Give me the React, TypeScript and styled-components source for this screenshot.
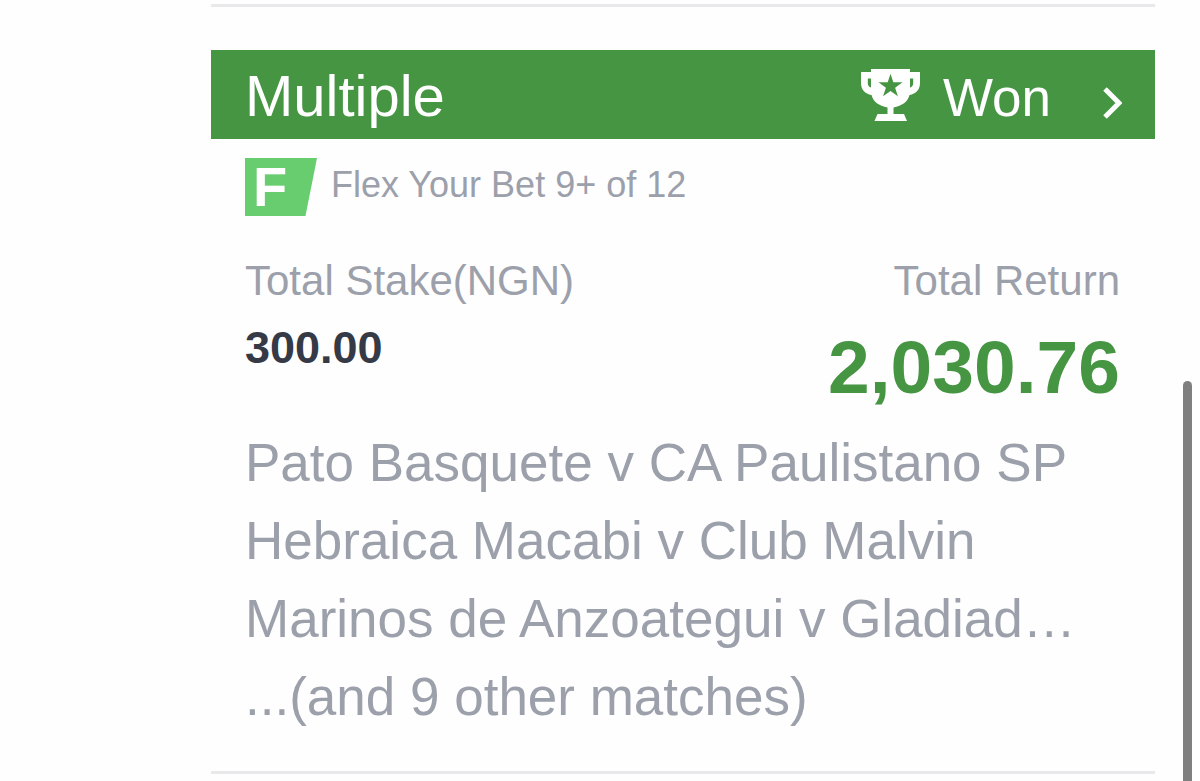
import React from 'react';
import styled, { createGlobalStyle } from 'styled-components';

const green = '#459543';
const grey = '#9ca0ab';

const GlobalStyle = createGlobalStyle`
  *, *::before, *::after { box-sizing: border-box; }
  body {
    margin: 0;
    background: #fefefe;
    font-family: "Liberation Sans", Arial, Helvetica, sans-serif;
    color: ${grey};
    overflow: hidden;
  }
`;

const Page = styled.main`
  padding: 4px 45px 0 211px;
`;

const Ticket = styled.article`
  padding-top: 43px;
  border-top: 3px solid #e9e9eb;
`;

const TicketHeader = styled.a`
  display: flex;
  align-items: baseline;
  padding: 5px 33px 0 34px;
  background: ${green};
  color: #fff;
  line-height: 82px;
  text-decoration: none;
`;

const BetType = styled.h2`
  flex: 1;
  margin: 0;
  font-size: 58px;
  font-weight: 400;
  line-height: inherit;
`;

const Status = styled.span`
  margin: 0 52px 0 23px;
  font-size: 53px;
`;

const Trophy = styled.svg`
  width: 59px;
  height: 52px;
  margin-bottom: 4px;
  align-self: center;
`;

const Chevron = styled.svg`
  width: 19px;
  height: 34px;
  margin-top: 12px;
  align-self: center;
`;

const Body = styled.div`
  padding: 19px 35px 35px 34px;
`;

const Flex = styled.div`
  display: flex;
  align-items: flex-start;
  gap: 14px;
  font-size: 36px;
  line-height: 54px;
`;

const FlexBadge = styled.span`
  width: 72px;
  padding-left: 8px;
  background: #68cd6f;
  clip-path: polygon(0 0, 100% 0, 84% 100%, 0 100%);
  color: #fff;
  font-size: 56px;
  font-weight: 700;
  line-height: 58px;
`;

const Totals = styled.dl`
  display: flex;
  justify-content: space-between;
  margin: 40px 0 10px;
`;

const Total = styled.div<{ $end?: boolean }>`
  text-align: ${(p) => (p.$end ? 'right' : 'left')};
`;

const Label = styled.dt`
  margin-bottom: 14px;
  font-size: 42px;
  line-height: 50px;
`;

const Amount = styled.dd<{ $won?: boolean }>`
  margin: 0;
  color: ${(p) => (p.$won ? green : '#353a46')};
  font-size: ${(p) => (p.$won ? 75 : 45)}px;
  font-weight: 700;
  line-height: ${(p) => (p.$won ? 94 : 56)}px;
`;

const Matches = styled.ul`
  margin: 0;
  padding: 0;
  list-style: none;
`;

const Match = styled.li`
  font-size: 53px;
  line-height: 78px;
  white-space: nowrap;
`;

const Divider = styled.hr`
  height: 3px;
  margin: 0;
  border: 0;
  background: #e9e9eb;
`;

const ScrollThumb = styled.div`
  position: fixed;
  top: 381px;
  right: 8px;
  bottom: -8px;
  width: 9px;
  border-radius: 5px;
  background: #7f7f7f;
`;

const matches = [
  'Pato Basquete v CA Paulistano SP',
  'Hebraica Macabi v Club Malvin',
  'Marinos de Anzoategui v Gladiad…',
  '...(and 9 other matches)',
];

export default function App() {
  return (
    <>
      <GlobalStyle />
      <Page>
        <Ticket>
          <TicketHeader href="#ticket">
            <BetType>Multiple</BetType>
            <Trophy viewBox="0 0 59 52" aria-hidden="true">
              <path
                fill="#fff"
                fillRule="evenodd"
                d="M10 0H49V3H59V14C59 20.500 55 25 48.500 26C47 32.500 41 37 32.500 38.500V45H43L46 52H13.500L16.500 45H26.500V38.500C18 37 12 32.500 10.500 26C4 25 0 20.500 0 14V3H10ZM10 9.500H6.800V14C6.800 16.500 8 18 10 18.500ZM49 9.500V18.500C51 18 52.200 16.500 52.200 14V9.500ZM29.500 4.800L26.700 13.300H17.500L24.900 18.700L22.100 27.300L29.500 22L36.900 27.300L34.100 18.700L41.500 13.300H32.300Z"
              />
            </Trophy>
            <Status>Won</Status>
            <Chevron viewBox="0 0 19 34" aria-hidden="true">
              <path d="M2 3L16 17L2 31" fill="none" stroke="#fff" strokeWidth="5" />
            </Chevron>
          </TicketHeader>
          <Body>
            <Flex>
              <FlexBadge aria-hidden="true">F</FlexBadge>
              <span>Flex Your Bet 9+ of 12</span>
            </Flex>
            <Totals>
              <Total>
                <Label>Total Stake(NGN)</Label>
                <Amount>300.00</Amount>
              </Total>
              <Total $end>
                <Label>Total Return</Label>
                <Amount $won>2,030.76</Amount>
              </Total>
            </Totals>
            <Matches>
              {matches.map((match) => (
                <Match key={match}>{match}</Match>
              ))}
            </Matches>
          </Body>
        </Ticket>
        <Divider />
      </Page>
      <ScrollThumb />
    </>
  );
}
